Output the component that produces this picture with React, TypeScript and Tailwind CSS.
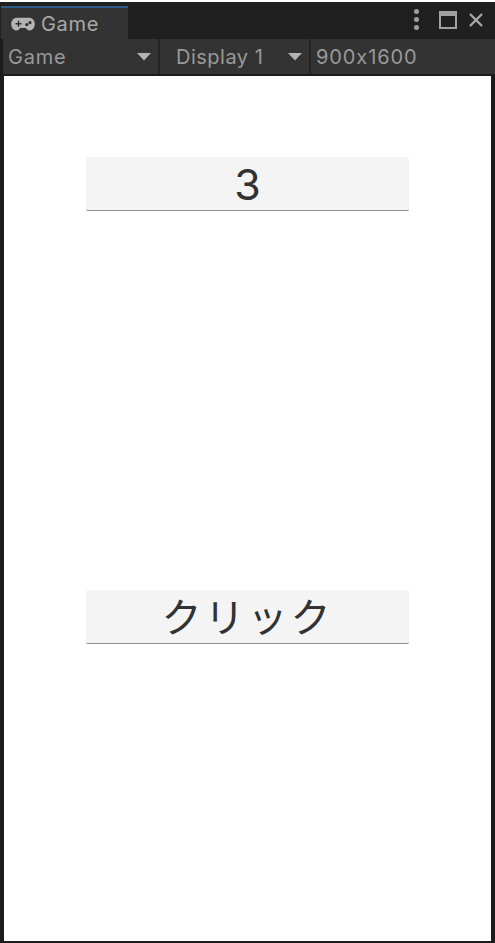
import React from "react";

const font = { fontFamily: '"Inter", "Noto Sans CJK JP", sans-serif' };

function Caret() {
  return (
    <svg width="14" height="9" viewBox="0 0 14 9" className="shrink-0">
      <polygon points="0,1 14,1 7,8.5" fill="#b4b4b4" />
    </svg>
  );
}

function GamepadIcon() {
  return (
    <svg width="24" height="14" viewBox="0 0 24 14" className="shrink-0">
      <path
        d="M6 .8h12c3.400 0 5.800 2.700 5.800 6.200s-2.200 6.400-5.200 6.400c-2 0-3-1.300-4-2.400H9.400c-1 1.100-2 2.400-4 2.400C2.400 13.400.2 10.500.2 7S2.600.8 6 .8z"
        fill="#b4b4b4"
      />
      <path d="M4.500 6h2.300V3.700h1.400V6h2.300v1.400H8.200v2.300H6.800V7.400H4.500z" fill="#2f2f2f" />
      <circle cx="15.800" cy="7.600" r="1.600" fill="#2f2f2f" />
      <circle cx="19" cy="5.600" r="1.600" fill="#2f2f2f" />
    </svg>
  );
}

export default function App() {
  return (
    <div
      className="flex h-[943px] w-[495px] flex-col overflow-hidden bg-[#1c1c1c] [font-feature-settings:'calt'_0]"
      style={font}
    >
      {/* top edge */}
      <div className="h-[2px] shrink-0 bg-white" />

      {/* tab bar */}
      <div className="flex h-[37px] shrink-0 items-end justify-between bg-[#202020]">
        <div className="ml-[1px] flex h-[33px] w-[127px] items-center gap-[6px] border-t-[2px] border-[#2c5d87] bg-[#333333] pl-[10px] text-[20px] tracking-[0.7px] text-[#a8a8a8]">
          <GamepadIcon />
          <span>Game</span>
        </div>
        <div className="mb-[3px] flex h-[33px] items-center gap-[11px] pr-[11px]">
          <div className="flex flex-col gap-[3px]">
            <div className="h-[5px] w-[5px] rounded-full bg-[#a0a0a0]" />
            <div className="h-[5px] w-[5px] rounded-full bg-[#a0a0a0]" />
            <div className="h-[5px] w-[5px] rounded-full bg-[#a0a0a0]" />
          </div>
          <div className="ml-[9px] h-[18px] w-[18px] border-[2px] border-t-[5px] border-[#a0a0a0]" />
          <svg width="16" height="16" viewBox="0 0 16 16">
            <path d="M2 2l12 12M14 2L2 14" stroke="#a8a8a8" strokeWidth="2.400" />
          </svg>
        </div>
      </div>

      {/* toolbar */}
      <div className="ml-[3px] flex h-[35px] shrink-0 bg-[#333333] text-[20px] tracking-[0.6px] text-[#999999]">
        <div className="flex w-[157px] items-center justify-between border-r-[2px] border-[#232323] pl-[5px] pr-[7px]">
          <span className="tracking-[0.8px]">Game</span>
          <Caret />
        </div>
        <div className="flex w-[151px] items-center justify-between border-r-[2px] border-[#232323] pl-[16px] pr-[7px]">
          <span className="tracking-[0.5px]">Display 1</span>
          <Caret />
        </div>
        <div className="flex items-center pl-[5px] tracking-[0.9px]">900x1600</div>
      </div>

      {/* game view */}
      <div className="mb-[2px] ml-[4px] mr-[4px] mt-[2px] flex flex-1 flex-col items-center bg-white">
        <div className="mt-[81px] flex h-[54px] w-[323px] items-center justify-center rounded-[2px] border-b border-[#8f8f8f] bg-[#f4f4f4] pt-[2px] text-[43px] text-[#323232]">
          3
        </div>
        <div className="mt-[379px] flex h-[54px] w-[323px] items-center justify-center rounded-[2px] border-b border-[#8f8f8f] bg-[#f4f4f4] pt-[3px] text-[40px] tracking-[3px] text-[#323232]">
          クリック
        </div>
      </div>
    </div>
  );
}
